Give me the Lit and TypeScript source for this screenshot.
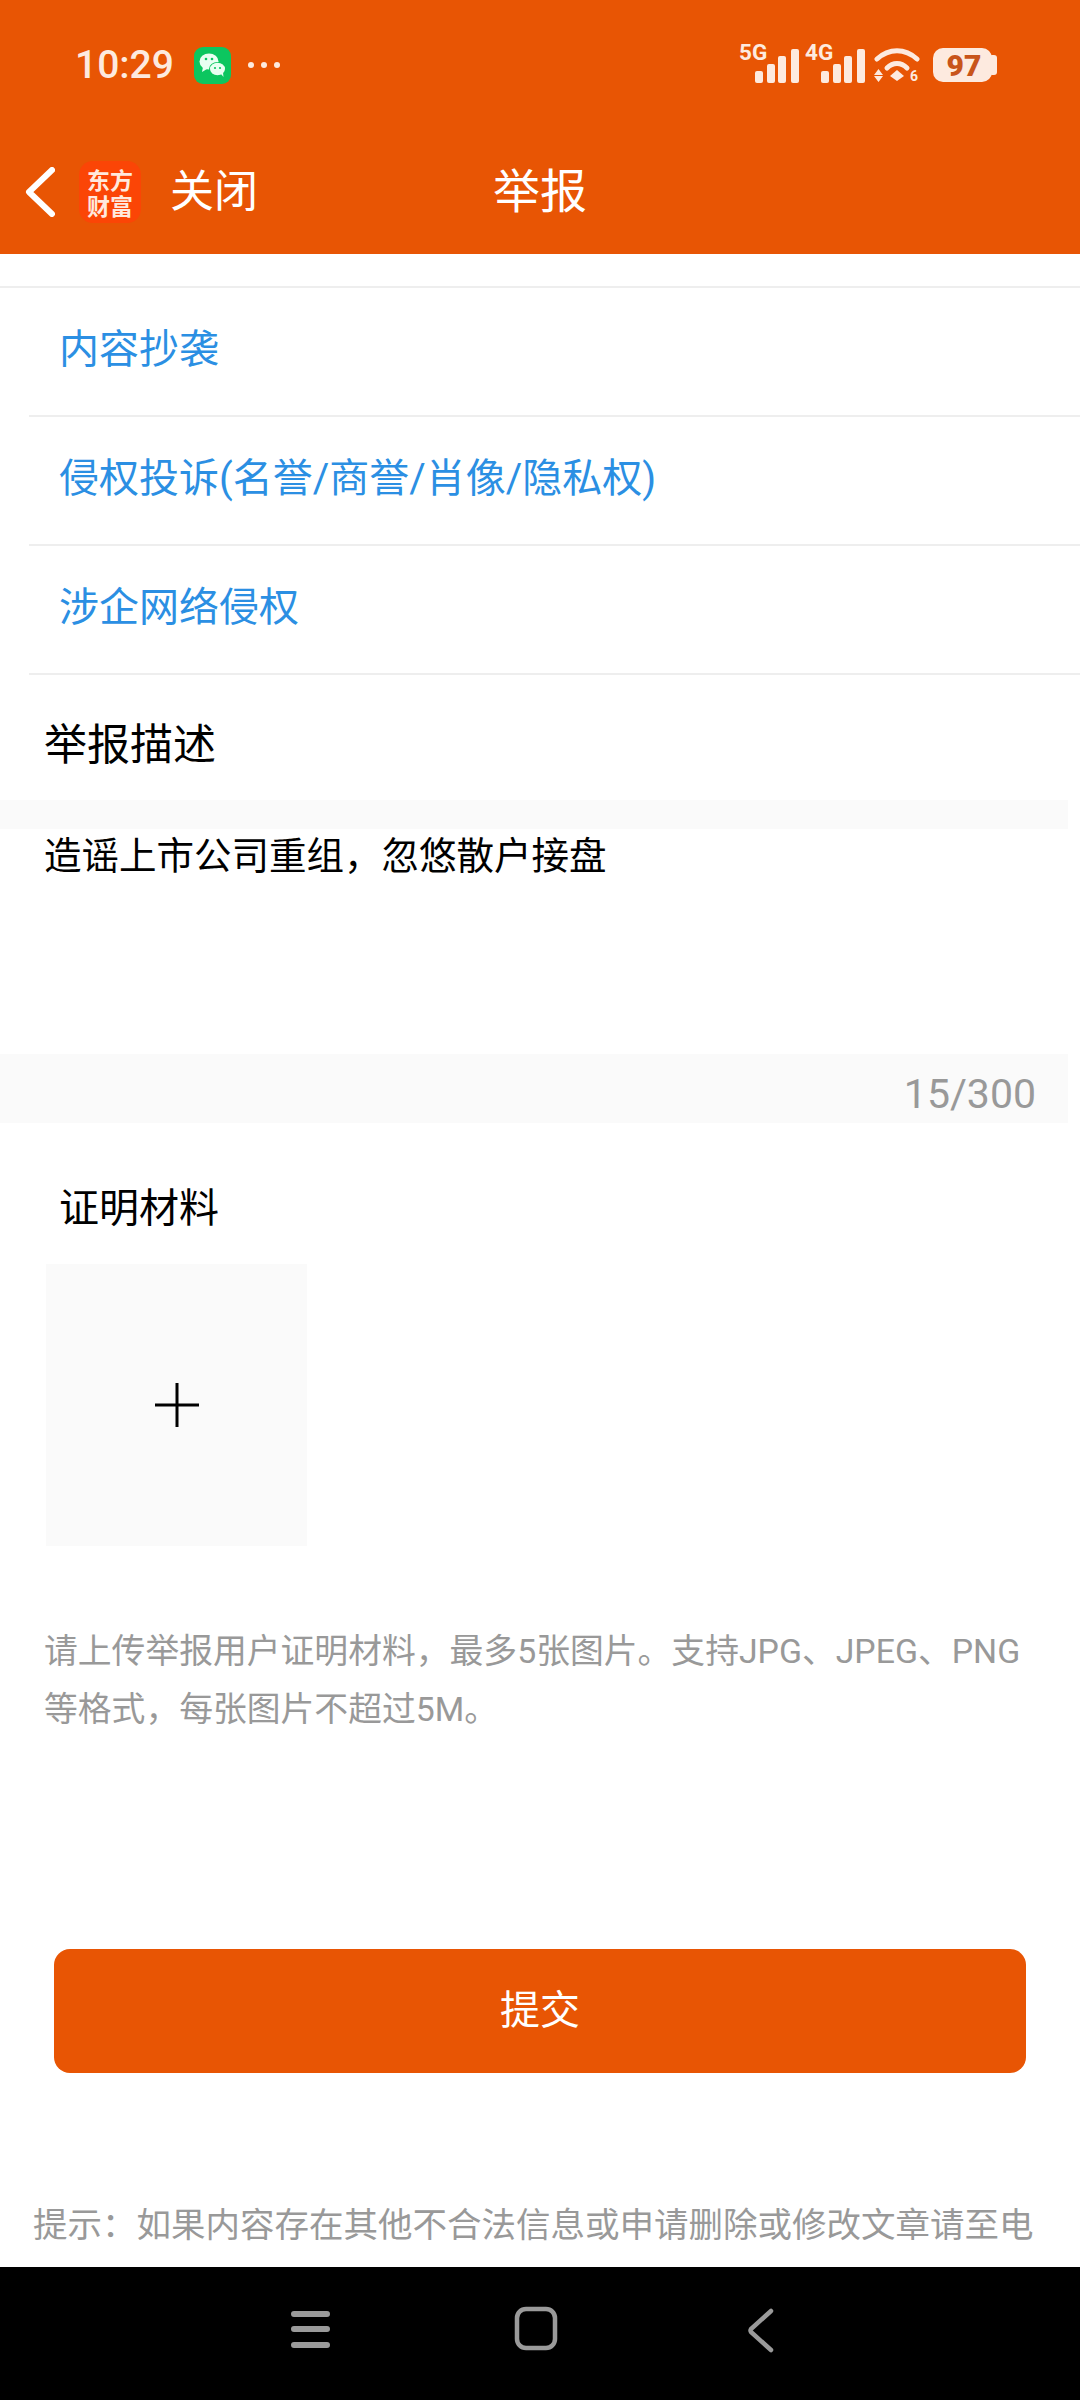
import { LitElement, html, css, svg } from 'lit'
import { customElement } from 'lit/decorators.js'

const signal = (label: string) => svg`
  <svg class="signal" viewBox="0 -6 62 52" width="62" height="52">
    <text x="0" y="16" font-size="22.5" font-weight="700" fill="#fdeadf" font-family="Roboto, sans-serif">${label}</text>
    <rect x="16" y="27" width="8" height="12" rx="2" fill="#fdeadf" />
    <rect x="28" y="20" width="8" height="19" rx="2" fill="#fdeadf" />
    <rect x="39" y="12" width="8" height="27" rx="2" fill="#fdeadf" />
    <rect x="52" y="5" width="8" height="34" rx="2" fill="#fdeadf" />
  </svg>
`

@customElement('app-root')
export class AppRoot extends LitElement {
  static styles = css`
    :host {
      display: flex;
      flex-direction: column;
      width: 1080px;
      height: 2400px;
      overflow: hidden;
      background: #fff;
      font-family: Roboto, 'Noto Sans CJK SC', sans-serif;
    }
    .header {
      flex: none;
      height: 254px;
      background: #e85504;
      color: #fff;
    }
    .status {
      height: 130px;
      display: flex;
      align-items: center;
      padding: 0 83px 0 75px;
      color: #fdeadf;
    }
    .time {
      font-size: 39px;
      font-weight: 500;
      line-height: 48px;
      width: 119px;
    }
    .wechat {
      display: block;
      width: 37px;
      height: 37px;
    }
    .dots {
      display: flex;
      gap: 7px;
      margin-left: 17px;
    }
    .dots span {
      width: 6px;
      height: 6px;
      border-radius: 50%;
      background: #fdeadf;
    }
    .status-right {
      margin-left: auto;
      display: flex;
      align-items: center;
    }
    .signal {
      display: block;
      margin-right: 4px;
      margin-top: -2px;
    }
    .wifi {
      display: block;
      margin: 0 13px 0 3px;
    }
    .battery {
      display: block;
    }
    .toolbar {
      height: 124px;
      display: grid;
      grid-template-columns: 1fr auto 1fr;
      align-items: center;
    }
    .toolbar-left {
      display: flex;
      align-items: center;
      padding-left: 25px;
    }
    .back {
      display: block;
      margin-right: 24px;
    }
    .logo {
      width: 62px;
      height: 62px;
      border-radius: 14px;
      background: #fb4506;
      color: #ffe9de;
      font-size: 23px;
      font-weight: 700;
      line-height: 26px;
      font-family: 'Noto Sans CJK SC', sans-serif;
      display: flex;
      align-items: center;
      justify-content: center;
      text-align: center;
      margin-right: 29px;
    }
    .close {
      font-size: 44px;
      line-height: 64px;
    }
    .title {
      font-size: 47px;
      line-height: 64px;
    }
    .main {
      flex: 1;
      min-height: 0;
      overflow: hidden;
      padding-top: 32px;
    }
    .reasons {
      border-top: 2px solid #eeeeee;
    }
    .reason {
      box-sizing: border-box;
      height: 129px;
      margin-left: 29px;
      padding: 0 0 11px 30px;
      border-bottom: 2px solid #eeeeee;
      display: flex;
      align-items: center;
      font-size: 40px;
      color: #2b8fe3;
    }
    .desc-title {
      padding: 44px 0 0 44px;
      height: 81px;
      font-size: 43px;
      line-height: 52px;
      color: #000;
    }
    .band {
      width: 1068px;
      background: #fafafa;
    }
    .band-top {
      height: 29px;
    }
    .desc-text {
      height: 225px;
      padding: 1px 0 0 44px;
      box-sizing: border-box;
      font-size: 37.5px;
      line-height: 52px;
      color: #000;
    }
    .counter {
      height: 69px;
      box-sizing: border-box;
      padding-right: 32px;
      display: flex;
      justify-content: flex-end;
      align-items: flex-end;
      padding-bottom: 4px;
      font-size: 41px;
      line-height: 50px;
      color: #999;
    }
    .proof-label {
      padding: 61px 0 0 59px;
      font-size: 40px;
      line-height: 50px;
      color: #000;
    }
    .upload {
      width: 261px;
      height: 282px;
      margin: 30px 0 0 46px;
      background: #fafafa;
      display: flex;
      align-items: center;
      justify-content: center;
    }
    .hint {
      margin-top: 77px;
      padding: 0 20px 0 44px;
      font-size: 33.8px;
      line-height: 58px;
      color: #999;
    }
    .submit {
      display: flex;
      align-items: center;
      justify-content: center;
      box-sizing: border-box;
      width: 972px;
      height: 124px;
      padding-bottom: 8px;
      margin: 210px 0 0 54px;
      border-radius: 16px;
      background: #e85504;
      color: #fff;
      font-size: 40px;
    }
    .tip {
      margin-top: 127px;
      padding-left: 33px;
      font-size: 34.5px;
      line-height: 50px;
      color: #999;
      white-space: nowrap;
    }
    .nav {
      flex: none;
      height: 133px;
      background: #000;
      display: flex;
      justify-content: center;
      align-items: flex-start;
    }
    .nav svg {
      display: block;
    }
  `

  render() {
    return html`
      <div class="header">
        <div class="status">
          <span class="time">10:29</span>
          <svg class="wechat" viewBox="0 0 37 37">
            <rect width="37" height="37" rx="9" fill="#0cc65f" />
            <ellipse cx="15" cy="14.5" rx="9.5" ry="8" fill="#e9fff2" />
            <path d="M9 20l-1 5 5-3z" fill="#e9fff2" />
            <ellipse cx="23.5" cy="22" rx="8.5" ry="7" fill="#0cc65f" />
            <ellipse cx="23.5" cy="22" rx="7.5" ry="6.2" fill="#e9fff2" />
            <path d="M27 27l2.5 3-.5-4.500z" fill="#e9fff2" />
            <circle cx="12" cy="12" r="1.3" fill="#0cc65f" />
            <circle cx="18" cy="12" r="1.3" fill="#0cc65f" />
            <circle cx="21" cy="21" r="1.1" fill="#0cc65f" />
            <circle cx="26" cy="21" r="1.1" fill="#0cc65f" />
          </svg>
          <div class="dots"><span></span><span></span><span></span></div>
          <div class="status-right">
            ${signal('5G')} ${signal('4G')}
            <svg class="wifi" viewBox="0 -6 46 46" width="46" height="46">
              <path d="M3 11C15 0 31 0 43 11" fill="none" stroke="#fdeadf" stroke-width="5" stroke-linecap="round" />
              <path d="M13 20C19 14 27 14 33 20" fill="none" stroke="#fdeadf" stroke-width="5" stroke-linecap="round" />
              <path d="M16 28l7-6 7 6-7 5z" fill="#fdeadf" />
              <path d="M0 27l4.500-6 4.500 6zM0 28h9l-4.500 6z" fill="#fdeadf" />
              <text x="36" y="33" font-size="14" font-weight="700" fill="#fdeadf" font-family="Roboto, sans-serif">6</text>
            </svg>
            <svg class="battery" viewBox="0 0 64 34" width="64" height="34">
              <rect x="0" y="0" width="59" height="34" rx="10" fill="#fdeadf" />
              <rect x="56" y="7" width="8" height="20" rx="3" fill="#fdeadf" />
              <text x="31" y="28" text-anchor="middle" font-size="30" font-weight="900" fill="#c8541a" font-family="Roboto, sans-serif">97</text>
            </svg>
          </div>
        </div>
        <div class="toolbar">
          <div class="toolbar-left">
            <svg class="back" viewBox="0 0 30 50" width="30" height="50">
              <path d="M27 3L4 25l23 22" fill="none" stroke="#fff" stroke-width="6" stroke-linecap="round" stroke-linejoin="round" />
            </svg>
            <div class="logo"><span>东方<br />财富</span></div>
            <span class="close">关闭</span>
          </div>
          <span class="title">举报</span>
          <span></span>
        </div>
      </div>

      <div class="main">
        <div class="reasons">
          <div class="reason">内容抄袭</div>
          <div class="reason">侵权投诉(名誉/商誉/肖像/隐私权)</div>
          <div class="reason">涉企网络侵权</div>
        </div>
        <div class="desc-title">举报描述</div>
        <div class="band band-top"></div>
        <div class="desc-text">造谣上市公司重组，忽悠散户接盘</div>
        <div class="band counter">15/300</div>
        <div class="proof-label">证明材料</div>
        <div class="upload">
          <svg viewBox="0 0 44 44" width="44" height="44">
            <path d="M22 0v44M0 22h44" stroke="#000" stroke-width="3" fill="none" />
          </svg>
        </div>
        <div class="hint">
          请上传举报用户证明材料，最多5张图片。支持JPG、JPEG、PNG<br />等格式，每张图片不超过5M。
        </div>
        <div class="submit">提交</div>
        <div class="tip">提示：如果内容存在其他不合法信息或申请删除或修改文章请至电</div>
      </div>

      <div class="nav">
        <svg viewBox="0 0 1080 133" width="1080" height="133">
          <path d="M294 47h33M294 62h33M294 78h33" stroke="#9a9a9a" stroke-width="6" stroke-linecap="round" fill="none" />
          <rect x="517" y="42" width="38" height="39" rx="9" stroke="#9a9a9a" stroke-width="4.500" fill="none" />
          <path d="M771 44L751 62q-1 1.500 0 3L771 83" stroke="#9a9a9a" stroke-width="4.500" stroke-linecap="round" fill="none" />
        </svg>
      </div>
    `
  }
}
